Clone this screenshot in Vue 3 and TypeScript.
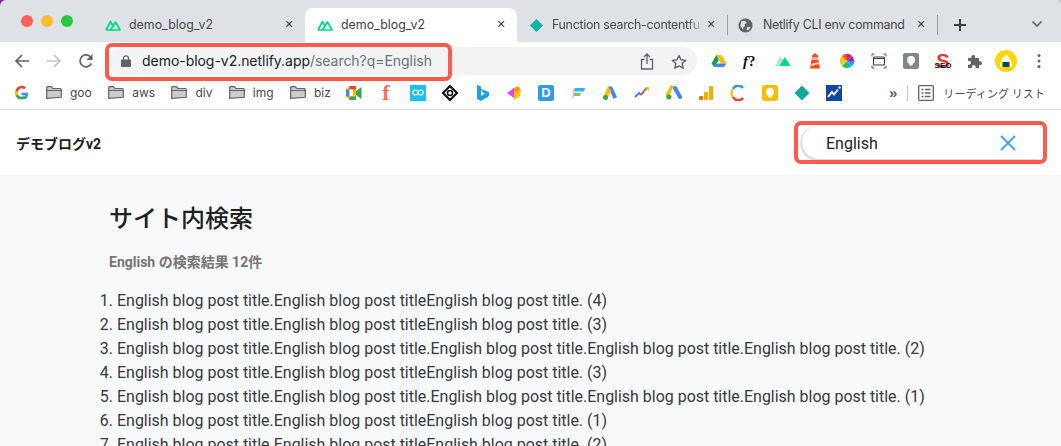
<script setup lang="ts">
const results: string[] = [
  'English blog post title.English blog post titleEnglish blog post title. (4)',
  'English blog post title.English blog post titleEnglish blog post title. (3)',
  'English blog post title.English blog post title.English blog post title.English blog post title.English blog post title. (2)',
  'English blog post title.English blog post titleEnglish blog post title. (3)',
  'English blog post title.English blog post title.English blog post title.English blog post title.English blog post title. (1)',
  'English blog post title.English blog post titleEnglish blog post title. (1)',
  'English blog post title.English blog post titleEnglish blog post title. (2)',
];
const folders: string[] = ['goo', 'aws', 'div', 'img', 'biz'];
</script>

<template>
  <div class="window">
    <div class="tabstrip">
      <div class="lights">
        <span class="light red"></span><span class="light amber"></span><span class="light green"></span>
      </div>
      <div class="tab first">
        <svg class="fav" viewBox="0 0 16 12"><path d="M1 11 5.500 2.500 8 7M5.500 11h9.500L10.500 3 5.500 11H1" fill="none" stroke="#00dc82" stroke-width="1.700" stroke-linejoin="round"/></svg>
        <span class="tab-title">demo_blog_v2</span>
        <span class="close">✕</span>
      </div>
      <div class="tab active">
        <svg class="fav" viewBox="0 0 16 12"><path d="M1 11 5.500 2.500 8 7M5.500 11h9.500L10.500 3 5.500 11H1" fill="none" stroke="#00dc82" stroke-width="1.700" stroke-linejoin="round"/></svg>
        <span class="tab-title">demo_blog_v2</span>
        <span class="close">✕</span>
      </div>
      <div class="tab third">
        <svg class="fav small" viewBox="0 0 16 16"><path d="M8 1l7 7-7 7-7-7z" fill="#0fb5a5"/></svg>
        <span class="tab-title clip">Function search-contentfu</span>
        <span class="close">✕</span>
      </div>
      <i class="tab-sep"></i>
      <div class="tab fourth">
        <svg class="fav small" viewBox="0 0 16 16"><circle cx="8" cy="8" r="7.500" fill="#5f6368"/><path d="M3.500 3.500 7.500 3l2 2.500-2.500 1 .5 2-2 1.500v2.500L2.500 8.500zM10 9.500h3.500l-2.500 3.500-2-.5z" fill="#dee1e6"/></svg>
        <span class="tab-title">Netlify CLI env command</span>
        <span class="close">✕</span>
      </div>
      <i class="tab-sep"></i>
      <span class="plus">
        <svg width="14" height="14" viewBox="0 0 14 14"><path d="M7 1v12M1 7h12" stroke="#3c4043" stroke-width="2"/></svg>
      </span>
      <span class="chev">
        <svg width="12" height="8" viewBox="0 0 12 8"><path d="M1.500 1.500 6 6l4.500-4.500" fill="none" stroke="#5f6368" stroke-width="1.600"/></svg>
      </span>
    </div>

    <div class="toolbar">
      <div class="nav">
        <svg width="16" height="16" viewBox="0 0 16 16"><path d="M15 8H2M8 2 2 8l6 6" fill="none" stroke="#5f6368" stroke-width="1.700"/></svg>
        <svg width="16" height="16" viewBox="0 0 16 16"><path d="M1 8h13M8 2l6 6-6 6" fill="none" stroke="#bdc1c6" stroke-width="1.700"/></svg>
        <svg width="16" height="16" viewBox="0 0 16 16"><path d="M13.400 10.500A6 6 0 1 1 13 4.500" fill="none" stroke="#5f6368" stroke-width="1.700"/><path d="M14.500 1v6h-6z" fill="#5f6368"/></svg>
      </div>
      <div class="omnibox">
        <svg class="lock" width="10" height="12" viewBox="0 0 10 12"><path d="M2.500 5V3.300a2.500 2.500 0 0 1 5 0V5" fill="none" stroke="#5f6368" stroke-width="1.200"/><rect y="4.500" width="10" height="7.500" rx="1" fill="#5f6368"/></svg>
        <span class="url"><b>demo-blog-v2.netlify.app</b>/search?q=English</span>
        <span class="omni-end">
          <svg width="14" height="17" viewBox="0 0 14 17"><path d="M4.500 6.500H1.500v9.500h11V6.500H9.500M7 11V1.500M4 4l3-3 3 3" fill="none" stroke="#5f6368" stroke-width="1.300"/></svg>
          <svg width="16" height="15" viewBox="0 0 16 15"><path d="m8 1.500 2 4.300 4.600.6-3.400 3.200.9 4.600L8 11.900l-4.100 2.300.9-4.600L1.400 6.400 6 5.800z" fill="none" stroke="#5f6368" stroke-width="1.400" stroke-linejoin="round"/></svg>
        </span>
        <div class="mark url-mark"></div>
      </div>
      <div class="exts">
        <svg class="ext" viewBox="0 0 16 14"><path d="M5.300 1h5.400L8 5.700z" fill="#fbbc04"/><path d="M5.300 1 .5 9.500 3.200 13 8 5.700z" fill="#0f9d58"/><path d="M10.700 1l4.800 8.500H10L8 5.700z" fill="#fbbc04"/><path d="M3.200 13H13l2.500-3.500H5.300z" fill="#4285f4"/></svg>
        <span class="ext fq"><i>f</i>?</span>
        <svg class="ext" viewBox="0 0 16 12"><path d="M0 11 5.500 1 8 5.500 4.500 11z" fill="#a5efcf"/><path d="M4.500 11 9.800 2l5.700 9z" fill="#00dc82"/></svg>
        <svg class="ext" viewBox="0 0 14 18"><path d="M7 0 3.500 3v2h7V3z" fill="#f4481e"/><rect x="3" y="5.500" width="8" height="2" fill="#f9a08a"/><path d="M3 8h8l1.500 9.500h-11z" fill="#f4481e"/><path d="M3 12l8-2v2.500l-8 2z" fill="#fbd9cf"/></svg>
        <svg class="ext" viewBox="0 0 20 20">
          <path d="M10 10V1a9 9 0 0 1 6.400 2.600z" fill="#e91e63"/><path d="M10 10l6.400-6.400A9 9 0 0 1 19 10z" fill="#9c27b0"/><path d="M10 10h9a9 9 0 0 1-2.600 6.400z" fill="#2196f3"/><path d="M10 10l6.400 6.400A9 9 0 0 1 10 19z" fill="#00bcd4"/><path d="M10 10v9a9 9 0 0 1-6.400-2.600z" fill="#4caf50"/><path d="M10 10l-6.400 6.400A9 9 0 0 1 1 10z" fill="#cddc39"/><path d="M10 10H1a9 9 0 0 1 2.600-6.400z" fill="#ffc107"/><path d="M10 10 3.600 3.600A9 9 0 0 1 10 1z" fill="#ff5722"/>
        </svg>
        <svg class="ext" viewBox="0 0 16 16"><path d="M1 3.500V1h2.500M12.500 1H15v2.500M15 12.500V15h-2.500M3.500 15H1v-2.500" fill="none" stroke="#2e7d32" stroke-width="1"/><rect x="2.500" y="4" width="11" height="8" rx="1" fill="none" stroke="#3c4043" stroke-width="1.200"/><path d="M2.500 5.500h11" stroke="#3c4043"/></svg>
        <svg class="ext" viewBox="0 0 16 16"><rect width="16" height="16" rx="2" fill="#80868b"/><circle cx="8" cy="7" r="4" fill="#fff"/><rect x="6.300" y="10.500" width="3.400" height="2" fill="#fff"/></svg>
        <span class="ext seo"><i>S</i><em>SEO</em></span>
        <svg class="ext" viewBox="0 0 16 16"><path d="M1 5h3.500a2 2 0 1 1 3.500-2v2h4v3.500a2 2 0 1 1 0 3.500V15H8.500a2 2 0 1 0-3.500 0H1v-3.500a2 2 0 1 0 0-3.500z" fill="#5f6368"/></svg>
        <span class="avatar">
          <svg width="22" height="22" viewBox="0 0 22 22"><circle cx="11" cy="11" r="11" fill="#ffd600"/><path d="M11 5c2 0 6 7 6 10a2 2 0 0 1-2 2H7a2 2 0 0 1-2-2c0-3 4-10 6-10z" fill="#fff"/><rect x="7.500" y="12" width="7" height="5" fill="#0d4f3c"/></svg>
        </span>
        <svg class="ext menu" viewBox="0 0 4 16"><circle cx="2" cy="2.500" r="1.500" fill="#5f6368"/><circle cx="2" cy="8" r="1.500" fill="#5f6368"/><circle cx="2" cy="13.500" r="1.500" fill="#5f6368"/></svg>
      </div>
    </div>

    <div class="bookmarks">
      <svg class="g" viewBox="0 0 16 16">
        <path d="M15 8.200H8v2.700h4a3.800 3.800 0 0 1-1.600 2.300l2.400 1.900C14.200 13.800 15 11.300 15 8.200z" fill="#4285f4"/>
        <path d="M8 15.500c2 0 3.600-.7 4.800-1.800l-2.400-1.900c-.6.500-1.500.8-2.400.8-1.900 0-3.500-1.300-4-3L1.500 11.500A7.500 7.500 0 0 0 8 15.500z" fill="#34a853"/>
        <path d="M4 10.600a4.500 4.500 0 0 1 0-3.200L1.500 5.500a7.500 7.500 0 0 0 0 6z" fill="#fbbc05"/>
        <path d="M8 3.500c1.100 0 2 .4 2.800 1.100l2.100-2.100A7.300 7.300 0 0 0 1.500 5.500L4 7.400c.5-1.700 2.100-3.900 4-3.900z" fill="#ea4335"/>
      </svg>
      <div class="folders">
        <span v-for="name in folders" :key="name" class="folder">
          <svg width="16" height="13" viewBox="0 0 16 13"><path d="M.7 12.300V1.700q0-1 1-1h3.600l1.500 1.800h7.500q1 0 1 1v7.800z" fill="#ccc" stroke="#5f6368" stroke-width="1.200"/><path d="M.7 4.500h14.600" stroke="#5f6368" stroke-width="1"/></svg>
          {{ name }}
        </span>
      </div>
      <div class="bm-icons">
        <svg class="bm" viewBox="0 0 16 14"><path d="M0 3.500 3.500 0H10v14H3.500L0 10.500z" fill="#fbbc04"/><path d="M3.500 0H10v3.500H3.500z" fill="#ea4335"/><path d="M0 3.500h3.500v7H0z" fill="#4285f4"/><path d="M3.500 3.500H7v7H3.500z" fill="#fff"/><path d="M3.500 10.500H10V14H3.500z" fill="#34a853"/><path d="M10 5l5.500-4v12L10 9z" fill="#34a853"/></svg>
        <span class="bm red-f">f</span>
        <span class="bm co">
          <svg width="12" height="7" viewBox="0 0 12 7"><circle cx="3.300" cy="3.500" r="2.500" fill="none" stroke="#fff" stroke-width="1.200"/><circle cx="8.700" cy="3.500" r="2.500" fill="none" stroke="#fff" stroke-width="1.200"/></svg>
        </span>
        <svg class="bm" viewBox="0 0 16 16"><path d="m8 1 7 7-7 7-7-7z" fill="none" stroke="#111" stroke-width="2.200" stroke-linejoin="round"/><circle cx="8" cy="8" r="2.500" fill="none" stroke="#111" stroke-width="1.500"/></svg>
        <svg class="bm" viewBox="0 0 16 16"><path d="M3 0l4 1.500V11l4-2.500L8 7 7 4l8 3v4l-8 5-4-2z" fill="#1ba0e2"/></svg>
        <svg class="bm" viewBox="0 0 16 16"><path d="M1 8l7-5v10z" fill="#e040fb"/><path d="M8 3l4-2 3 4-7 3z" fill="#ff9800"/><path d="M8 8l7-3-1 6-6 4z" fill="#ffc107"/></svg>
        <span class="bm dee">D</span>
        <svg class="bm" viewBox="0 0 16 16"><path d="M4 3h11l-1 3.500H4z" fill="#29b6f6"/><path d="M4 8h7l-1 3H3.500z" fill="#8bc34a"/><path d="M3.500 3 2 14h1.500L5 3z" fill="#ccc"/></svg>
        <svg class="bm" viewBox="0 0 16 16"><path d="M6 1.500h4L15 12l-3.500 2z" fill="#4285f4"/><path d="M6 1.500 1 12l3.500 2L9.500 6z" fill="#fbbc04"/><circle cx="3.500" cy="12.500" r="2.500" fill="#34a853"/></svg>
        <svg class="bm" viewBox="0 0 16 16"><path d="M1 12 5 8l2 2" fill="none" stroke="#4285f4" stroke-width="2"/><path d="M7 10l3-4" fill="none" stroke="#ea4335" stroke-width="2"/><path d="M10 6l3-3" fill="none" stroke="#34a853" stroke-width="2"/><path d="M11 2h4v4z" fill="#fbbc04"/></svg>
        <svg class="bm" viewBox="0 0 16 16"><path d="M5.500 2 1 11" stroke="#fbbc04" stroke-width="3.500" stroke-linecap="round"/><path d="M9 3l5 9" stroke="#4285f4" stroke-width="4" stroke-linecap="round"/><circle cx="3" cy="12" r="2.500" fill="#34a853"/></svg>
        <svg class="bm" viewBox="0 0 16 16"><rect x="1" y="11" width="4" height="4" rx="1" fill="#e8710a"/><rect x="6" y="7" width="4" height="8" rx="1" fill="#f9ab00"/><rect x="11" y="1" width="4" height="14" rx="1" fill="#f9ab00"/></svg>
        <svg class="bm" viewBox="0 0 16 16"><path d="M13 3A6 6 0 0 0 3 4" fill="none" stroke="#2196f3" stroke-width="2.500"/><path d="M3 4a6 6 0 0 0 0 8" fill="none" stroke="#ffc107" stroke-width="2.500"/><path d="M3 12a6 6 0 0 0 10 1" fill="none" stroke="#f44336" stroke-width="2.500"/></svg>
        <svg class="bm" viewBox="0 0 16 16"><rect width="16" height="16" rx="3" fill="#fbbc04"/><circle cx="8" cy="7" r="4" fill="#fff"/><rect x="6.300" y="10.500" width="3.400" height="2" fill="#fff"/></svg>
        <svg class="bm" viewBox="0 0 16 16"><path d="M8 .5 15.500 8 8 15.500.5 8z" fill="#12a898"/></svg>
        <svg class="bm" viewBox="0 0 16 16"><rect width="16" height="16" fill="#0d47a1"/><path d="M2 12l4-5 2 2.500 4-5" fill="none" stroke="#fff" stroke-width="2"/><circle cx="13.500" cy="2.500" r="1.200" fill="#fff"/></svg>
      </div>
      <div class="bm-end">
        <span class="more">»</span>
        <i class="bm-sep"></i>
        <svg width="16" height="16" viewBox="0 0 16 16"><rect x=".7" y=".7" width="14.600" height="14.600" rx="1" fill="none" stroke="#5f6368" stroke-width="1.300"/><path d="M3.500 4.500h2M7 4.500h5.500M3.500 8h2M7 8h5.500M3.500 11.500h2M7 11.500h5.500" stroke="#5f6368" stroke-width="1.300"/></svg>
        <span class="reading">リーディング リスト</span>
      </div>
    </div>

    <header class="site-head">
      <div class="logo">デモブログv2</div>
      <div class="search">
        <span class="search-text">English</span>
        <svg width="16" height="16" viewBox="0 0 16 16"><path d="M1 1l14 14M15 1 1 15" stroke="#42a5f5" stroke-width="2"/></svg>
        <div class="mark search-mark"></div>
      </div>
    </header>

    <main class="content">
      <h1>サイト内検索</h1>
      <p class="count">English の検索結果 12件</p>
      <ol>
        <li v-for="(title, i) in results" :key="i">{{ title }}</li>
      </ol>
    </main>
  </div>
</template>

<style>
html, body { margin: 0; height: 100%; overflow: hidden; background: #fff; }
</style>

<style scoped>
.window {
  width: 1061px;
  height: 446px;
  overflow: hidden;
  display: flex;
  flex-direction: column;
  font-family: Roboto, "Noto Sans CJK JP", sans-serif;
  color: #212121;
  background: linear-gradient(90deg, #98209a 0 12px, #c9ccd1 12px);
}

/* tab strip */
.tabstrip {
  flex: none;
  height: 42px;
  display: flex;
  align-items: flex-end;
  background: #dee1e6;
  border-radius: 6px 6px 0 0;
}
.lights {
  width: 95px;
  align-self: flex-start;
  display: flex;
  gap: 8px;
  padding: 15px 0 0 21px;
  box-sizing: border-box;
}
.light { width: 12px; height: 12px; border-radius: 50%; }
.light.red { background: #ff5f57; }
.light.amber { background: #febc2e; }
.light.green { background: #28c840; }
.tab {
  width: 210px;
  height: 34px;
  display: flex;
  align-items: center;
  padding: 0 10px 0 10px;
  box-sizing: border-box;
  font: 12.4px/16px "Inter", "Liberation Sans", sans-serif;
  color: #45484c;
}
.tab.active {
  width: 212px;
  background: #fff;
  border-radius: 8px 8px 0 0;
  padding: 0 10px 0 12px;
  color: #3c4043;
}
.tab.third { padding: 0 10px 0 12px; letter-spacing: -0.3px; }
.tab.fourth { width: 209px; letter-spacing: -0.25px; }
.fav { width: 16px; height: 12px; flex: none; margin-right: 8px; }
.fav.small { width: 15px; height: 15px; }
.fourth .fav.small { margin-right: 10px; }
.tab-title { flex: 1; white-space: nowrap; overflow: hidden; }
.tab-title.clip {
  -webkit-mask-image: linear-gradient(90deg, #000 88%, transparent);
  mask-image: linear-gradient(90deg, #000 88%, transparent);
}
.close { width: 12px; text-align: center; font: 700 11px/12px "DejaVu Sans", sans-serif; color: #3c4043; }
.tab-sep { flex: none; width: 1px; height: 20px; background: #9aa0a6; margin-bottom: 7px; }
.plus { flex: none; display: flex; margin: 0 0 10px 15px; }
.chev { flex: none; display: flex; margin: 0 0 14px 64px; }

/* toolbar */
.toolbar {
  flex: none;
  height: 38px;
  background: #fff;
  display: flex;
  align-items: center;
}
.nav {
  width: 108px;
  display: flex;
  gap: 16px;
  padding-left: 14px;
  box-sizing: border-box;
}
.omnibox {
  position: relative;
  width: 589px;
  height: 28px;
  background: #f1f3f4;
  border-radius: 14px;
  display: flex;
  align-items: center;
  padding: 0 10px 0 13px;
  box-sizing: border-box;
}
.lock { flex: none; }
.url {
  margin-left: 11px;
  font: 14px/20px "Inter", "Liberation Sans", sans-serif;
  letter-spacing: -0.04px;
  color: #6c7075;
  white-space: nowrap;
}
.url b { font-weight: 400; color: #202124; }
.omni-end { margin-left: auto; display: flex; align-items: center; gap: 17px; }
.mark {
  position: absolute;
  border: 4px solid #ff5a4d;
  border-radius: 7px;
  box-sizing: border-box;
  pointer-events: none;
}
.url-mark { left: -3px; top: -4px; width: 347px; height: 38px; }
.exts {
  flex: 1;
  display: flex;
  align-items: center;
  padding-left: 14px;
  gap: 16px;
}
.ext { width: 16px; height: 16px; flex: none; }
.fq { font: 700 15px/16px "Liberation Serif", serif; color: #111; white-space: nowrap; }
.seo { position: relative; text-align: center; }
.seo i { display: block; font: 700 20px/16px "Liberation Sans", sans-serif; color: #e53935; font-style: normal; }
.seo em { position: absolute; left: -3px; right: -3px; top: 9px; font: 700 8px/8px "Liberation Sans", sans-serif; color: #111; font-style: normal; }
.avatar { flex: none; display: flex; margin-left: -4px; }
.menu { width: 4px; margin-left: 4px; }

/* bookmarks */
.bookmarks {
  flex: none;
  height: 30px;
  padding: 0 0 4px 14px;
  background: #fff;
  border-bottom: 1px solid #dadce0;
  box-sizing: border-box;
  display: flex;
  align-items: center;
  font: 12px/16px "Inter", "Liberation Sans", sans-serif;
  color: #45484c;
}
.g { width: 15px; height: 15px; flex: none; margin-right: 17px; }
.folders { width: 300px; flex: none; display: flex; gap: 16.4px; }
.folder { display: flex; align-items: center; gap: 8px; flex: none; }
.bm-icons { display: flex; align-items: center; gap: 16px; }
.bm { width: 16px; height: 16px; flex: none; display: flex; align-items: center; justify-content: center; }
.red-f { font: 700 22px/16px "Liberation Serif", serif; color: #ff6b5b; }
.co { background: #1cc0f5; }
.dee { background: #2e9bf0; color: #fff; border-radius: 2px; font: 700 13px/16px "Liberation Sans", sans-serif; }
.bm-end { margin-left: auto; display: flex; align-items: center; padding-right: 16px; }
.more { font: 700 15px/16px "Liberation Sans", sans-serif; color: #5f6368; }
.bm-sep { width: 1px; height: 16px; background: #c4c7cc; margin: 0 10px 0 10px; }
.reading { margin-left: 9px; font: 11px/16px "Noto Sans CJK JP", sans-serif; color: #45484c; letter-spacing: 0.1px; }

/* page */
.site-head {
  flex: none;
  height: 65px;
  background: #fff;
  display: flex;
  align-items: center;
  justify-content: space-between;
  padding: 0 21px 0 16px;
}
.logo { font-size: 14px; font-weight: 700; }
.search {
  position: relative;
  width: 238px;
  height: 33px;
  border-radius: 17px 0 0 17px;
  box-shadow: -1px 1px 3px rgba(0, 0, 0, 0.25);
  display: flex;
  align-items: center;
  justify-content: space-between;
  padding: 0 24px;
  box-sizing: border-box;
  font-size: 16px;
}
.search-text { padding-top: 1px; }
.search-mark { left: -8px; top: -5px; width: 253px; height: 43px; }
.content { flex: 1; padding: 28px 0 0 109px; background: #f8f9fb; }
h1 { margin: 0; font-size: 24px; line-height: 32px; font-weight: 500; }
.count { margin: 17px 0 0; font-size: 14px; line-height: 20px; font-weight: 700; color: #757575; }
ol { margin: 17px 0 0; padding: 0 0 0 8px; font-size: 15.96px; line-height: 24px; color: #37393d; white-space: nowrap; }
</style>
